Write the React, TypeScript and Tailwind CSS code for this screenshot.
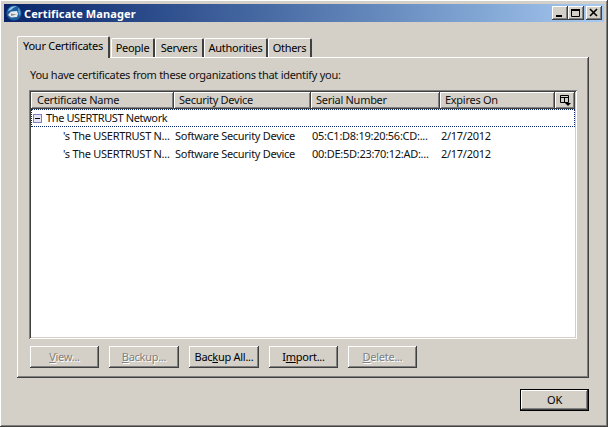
import React from 'react';

const raised = 'shadow-[inset_-1px_-1px_#404040,inset_1px_1px_#ffffff,inset_-2px_-2px_#808080]';

const tabs = [
  { label: 'People', width: 'w-[44px]' },
  { label: 'Servers', width: 'w-[49px]' },
  { label: 'Authorities', width: 'w-[64px]' },
  { label: 'Others', width: 'w-[44px]' },
];

const certs = [
  { device: 'Software Security Device', serial: '05:C1:D8:19:20:56:CD:...', expires: '2/17/2012' },
  { device: 'Software Security Device', serial: '00:DE:5D:23:70:12:AD:...', expires: '2/17/2012' },
];

const AppIcon = () => (
  <svg width="16" height="16" viewBox="0 0 16 16" className="shrink-0">
    <circle cx="8" cy="8" r="7.5" fill="#1d5f9e" />
    <path d="M2 6 C3 2 7 0.5 11 1.5 C8 2 6 3.5 5 5 Z" fill="#8fc4ea" />
    <path d="M12 2.5 C14.5 4.5 15 8 14 11 L12.5 9 Z" fill="#5a9fd6" />
    <path d="M2 10 L5 6.5 L11 6 L12 9 L11 12 L5 12.5 Z" fill="#e8e8e8" />
    <path d="M5 8.5 L10.5 9.5 L5 11 Z" fill="#7f8da0" />
  </svg>
);

const WinButton = ({ children, className = '' }: { children: React.ReactNode; className?: string }) => (
  <div className={`w-4 h-[14px] bg-[#d4d0c8] flex items-center justify-center ${raised} ${className}`}>{children}</div>
);

const Button = ({ children, disabled, className = 'w-[70px]' }: { children: React.ReactNode; disabled?: boolean; className?: string }) => (
  <div
    className={`h-[22px] bg-[#d4d0c8] flex items-center justify-center text-[11px] ${raised} ${className} ${
      disabled ? 'text-[#808080] [text-shadow:1px_1px_0_#ffffff]' : 'text-black'
    }`}
  >
    {children}
  </div>
);

const HeaderCell = ({ label, className }: { label: string; className: string }) => (
  <div className={`h-[17px] bg-[#d4d0c8] flex items-center text-[11px] text-[#111111] ${raised} ${className}`}>{label}</div>
);

export default function App() {
  return (
    <div className="w-[608px] h-[427px] bg-[#d4d0c8] p-[4px] flex flex-col overflow-hidden text-black font-['Noto_Sans',sans-serif] tracking-[-0.28px] shadow-[inset_-1px_-1px_#404040,inset_1px_1px_#ffffff,inset_-2px_-2px_#808080]">
      {/* title bar */}
      <div className="h-[18px] shrink-0 flex items-center px-[2px] bg-gradient-to-r from-[#0a246a] to-[#a6caf0]">
        <AppIcon />
        <span className="ml-[2px] text-[11px] font-bold text-white leading-none tracking-[0.1px]">Certificate Manager</span>
        <div className="ml-auto flex">
          <WinButton>
            <svg width="10" height="10" viewBox="0 0 10 10">
              <rect x="1" y="7" width="6" height="2" fill="#000" />
            </svg>
          </WinButton>
          <WinButton>
            <svg width="10" height="10" viewBox="0 0 10 10">
              <path d="M0.5 1.5 H8.5 V8.5 H0.5 Z" fill="none" stroke="#000" />
              <rect x="0" y="1" width="9" height="2" fill="#000" />
            </svg>
          </WinButton>
          <WinButton className="ml-[2px]">
            <svg width="10" height="10" viewBox="0 0 10 10">
              <path d="M1 1 L8 8 M8 1 L1 8" stroke="#000" strokeWidth="1.6" fill="none" />
            </svg>
          </WinButton>
        </div>
      </div>

      <div className="flex-1 flex flex-col pt-[14px] pl-[13px] pr-[15px]">
        {/* tab strip */}
        <div className="h-[22px] flex items-end relative z-10 -mb-px shrink-0">
          <div className="w-[93px] h-[22px] bg-[#d4d0c8] rounded-t-[2px] border-t border-l border-white border-r-2 border-r-[#404040] flex items-center justify-center text-[11px] pb-[2px]">
            Your Certificates
          </div>
          <div className="flex ml-px">
            {tabs.map((t) => (
              <div
                key={t.label}
                className={`${t.width} h-[19px] mb-px bg-[#d4d0c8] rounded-t-[2px] border-t border-l border-white border-r-2 border-r-[#404040] flex items-center justify-center text-[11px]`}
              >
                {t.label}
              </div>
            ))}
          </div>
        </div>

        {/* panel */}
        <div className={`h-[321px] shrink-0 bg-[#d4d0c8] pt-[11px] px-[12px] flex flex-col ${raised}`}>
          <div className="h-[13px] pl-px flex items-center text-[11px] leading-none text-[#111111] whitespace-nowrap">
            You have certificates from these organizations that identify you:
          </div>

          {/* tree */}
          <div className="mt-[9px] h-[249px] bg-white p-[2px] shadow-[inset_1px_1px_#808080,inset_-1px_-1px_#ffffff,inset_2px_2px_#404040,inset_-2px_-2px_#d4d0c8] flex flex-col">
            <div className="flex shrink-0">
              <HeaderCell label="Certificate Name" className="w-[143px] pl-[6px]" />
              <HeaderCell label="Security Device" className="w-[137px] pl-[5px]" />
              <HeaderCell label="Serial Number" className="w-[129px] pl-[5px]" />
              <HeaderCell label="Expires On" className="w-[115px] pl-[5px]" />
              <div className={`w-[20px] h-[17px] bg-[#d4d0c8] flex items-center justify-center ${raised}`}>
                <svg width="11" height="11" viewBox="0 0 11 11">
                  <path d="M0.5 0.5 H8.5 V7.5 H0.5 Z M0.5 2.5 H8.5 M4.5 2.5 V7.5" fill="none" stroke="#000" />
                  <path d="M5 8 H11 L8 11 Z" fill="#000" />
                </svg>
              </div>
            </div>

            <div className="h-[18px] flex items-center border border-dotted border-[#0a246a] text-[11px] text-[#111111]">
              <span className="w-[9px] h-[9px] ml-[1px] border border-[#8080c0] bg-[#e4e4f4] flex items-center justify-center shrink-0">
                <span className="w-[5px] h-px bg-black" />
              </span>
              <span className="ml-[4px] tracking-[-0.38px]">The USERTRUST Network</span>
            </div>

            {certs.map((c) => (
              <div key={c.serial} className="h-[18px] flex items-center text-[11px] text-[#111111]">
                <div className="w-[143px] pl-[32px] whitespace-nowrap">'s The USERTRUST N...</div>
                <div className="w-[137px] pl-px whitespace-nowrap">{c.device}</div>
                <div className="w-[129px] pl-px whitespace-nowrap">{c.serial}</div>
                <div className="w-[115px] pl-px whitespace-nowrap">{c.expires}</div>
              </div>
            ))}
          </div>

          {/* action buttons */}
          <div className="mt-[7px] pl-px flex gap-[10px]">
            <Button disabled className="w-[69px]">
              <span><u>V</u>iew...</span>
            </Button>
            <Button disabled>
              <span><u>B</u>ackup...</span>
            </Button>
            <Button>
              <span>Bac<u>k</u>up All...</span>
            </Button>
            <Button className="w-[69px]">
              <span>I<u>m</u>port...</span>
            </Button>
            <Button disabled className="w-[69px]">
              <span><u>D</u>elete...</span>
            </Button>
          </div>
        </div>

        <div className="mt-[11px] flex justify-end">
          <Button className="w-[69px] border border-black">OK</Button>
        </div>
      </div>
    </div>
  );
}
